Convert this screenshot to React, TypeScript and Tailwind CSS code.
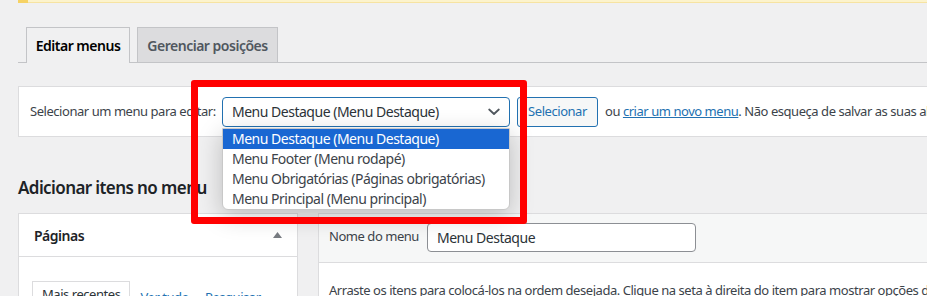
import React from "react";

function Chevron() {
  return (
    <svg width="12" height="8" viewBox="0 0 12 8" className="block">
      <path d="M1.2 1.5 L6 6 L10.8 1.5" fill="none" stroke="#50575e" strokeWidth="1.8" strokeLinecap="round" strokeLinejoin="round" />
    </svg>
  );
}

function UpTriangle() {
  return (
    <svg width="9" height="6" viewBox="0 0 9 6" className="block">
      <polygon points="4.5,0 9,6 0,6" fill="#787c82" />
    </svg>
  );
}

const options = [
  "Menu Destaque (Menu Destaque)",
  "Menu Footer (Menu rodapé)",
  "Menu Obrigatórias (Páginas obrigatórias)",
  "Menu Principal (Menu principal)",
];

export default function App() {
  return (
    <div className="relative w-[927px] h-[296px] overflow-hidden bg-[#f0f0f1] font-['Noto_Sans',sans-serif] text-[#3c434a]">
      <div className="w-[1300px] pl-[18px]">
        {/* bottom edge of a notice */}
        <div className="flex h-[3px]">
          <div className="w-[10px] bg-[#f6d264]" />
          <div className="flex-1 bg-[#fcf3cc] border-b border-[#f6e3a2]" />
        </div>

        {/* tabs */}
        <div className="mt-[24px] flex items-end h-[36px] border-b border-[#c3c4c7] pl-[8px]">
          <div className="-mb-px flex h-[36px] w-[104px] items-center justify-center border border-b-0 border-[#c3c4c7] bg-[#f0f0f1] text-[14px] tracking-[-0.035em] font-semibold text-[#000]">
            Editar menus
          </div>
          <div className="ml-[7px] flex h-[35px] w-[141px] items-center justify-center border border-b-0 border-[#c3c4c7] bg-[#dcdcde] text-[14px] tracking-[-0.035em] font-semibold text-[#50575e]">
            Gerenciar posições
          </div>
        </div>

        {/* manage menus box */}
        <div className="mt-[23px] flex h-[51px] items-center border border-[#dcdcde] bg-white pl-[11px] text-[13px] tracking-[-0.035em]">
          <span className="w-[192px] shrink-0 whitespace-nowrap">Selecionar um menu para editar:</span>
          <div className="relative flex h-[30px] w-[288px] shrink-0 items-center justify-between rounded-[4px] border border-[#2271b1] bg-white pl-[9px] pr-[9px] text-[14px] tracking-[-0.035em] text-[#2c3338]">
            <span className="whitespace-nowrap">Menu Destaque (Menu Destaque)</span>
            <Chevron />
            {/* open dropdown list */}
            <div className="absolute left-[-1px] top-[30px] z-10 w-[288px] overflow-hidden rounded-b-[6px] border border-[#c8c8c8] bg-white shadow-[0_6px_24px_rgba(0,0,0,0.22)]">
              {options.map((o, i) => (
                <div
                  key={o}
                  className={
                    i === 0
                      ? "flex h-[20px] items-center whitespace-nowrap bg-[#1967d2] pl-[9px] text-[14px] tracking-[-0.035em] text-white"
                      : "flex h-[20px] items-center whitespace-nowrap pl-[9px] text-[14px] tracking-[-0.035em] text-[#3c434a]"
                  }
                >
                  {o}
                </div>
              ))}
            </div>
          </div>
          <button className="ml-[7px] flex h-[30px] w-[81px] shrink-0 items-center justify-center rounded-[3px] border border-[#2271b1] bg-[#f6f7f7] text-[13px] tracking-[-0.035em] text-[#2271b1]">
            Selecionar
          </button>
          <span className="ml-[7px] whitespace-nowrap">
            ou <span className="text-[#2271b1] underline">criar um novo menu</span>. Não esqueça de salvar as suas alterações!
          </span>
        </div>

        {/* heading */}
        <h2 className="mt-[39px] mb-[13px] h-[24px] leading-[24px] text-[17px] tracking-[-0.035em] font-semibold text-[#1d2327]">
          Adicionar itens no menu
        </h2>

        {/* columns */}
        <div className="flex gap-[20px] items-start">
          <div className="w-[280px] shrink-0 border border-[#dcdcde] bg-white">
            <div className="flex h-[43px] items-center justify-between border-b border-[#dcdcde] pl-[15px] pr-[15px]">
              <span className="text-[14px] tracking-[-0.035em] font-semibold text-[#1d2327]">Páginas</span>
              <UpTriangle />
            </div>
            <div className="pl-[13px] pt-[24px] pb-[20px]">
              <div className="flex items-end text-[13px] tracking-[-0.035em]">
                <div className="flex h-[26px] items-center border border-b-0 border-[#dcdcde] px-[9px] text-[#2c3338]">
                  Mais recentes
                </div>
                <span className="ml-[10px] text-[#2271b1]">Ver tudo</span>
                <span className="ml-[16px] text-[#2271b1]">Pesquisar</span>
              </div>
            </div>
          </div>

          <div className="w-[900px] border border-[#dcdcde] bg-white">
            <div className="flex h-[49px] items-center border-b border-[#dcdcde] bg-[#f6f7f7] pl-[10px] pb-[2px]">
              <span className="w-[98px] shrink-0 text-[13px] tracking-[-0.035em] whitespace-nowrap">Nome do menu</span>
              <div className="flex h-[29px] w-[269px] items-center rounded-[4px] border border-[#8c8f94] bg-white pl-[9px] text-[14px] tracking-[-0.035em] text-[#2c3338]">
                Menu Destaque
              </div>
            </div>
            <div className="pl-[10px] pt-[17px] pb-[20px] text-[13px] tracking-[-0.035em] leading-[20px] whitespace-nowrap">
              Arraste os itens para colocá-los na ordem desejada. Clique na seta à direita do item para mostrar opções de configuração adicionais.
            </div>
          </div>
        </div>
      </div>

      {/* red annotation box */}
      <div className="pointer-events-none absolute left-[191px] top-[80px] z-20 h-[144px] w-[336px] rounded-[3px] border-[7px] border-[#ff0000]" />
    </div>
  );
}
